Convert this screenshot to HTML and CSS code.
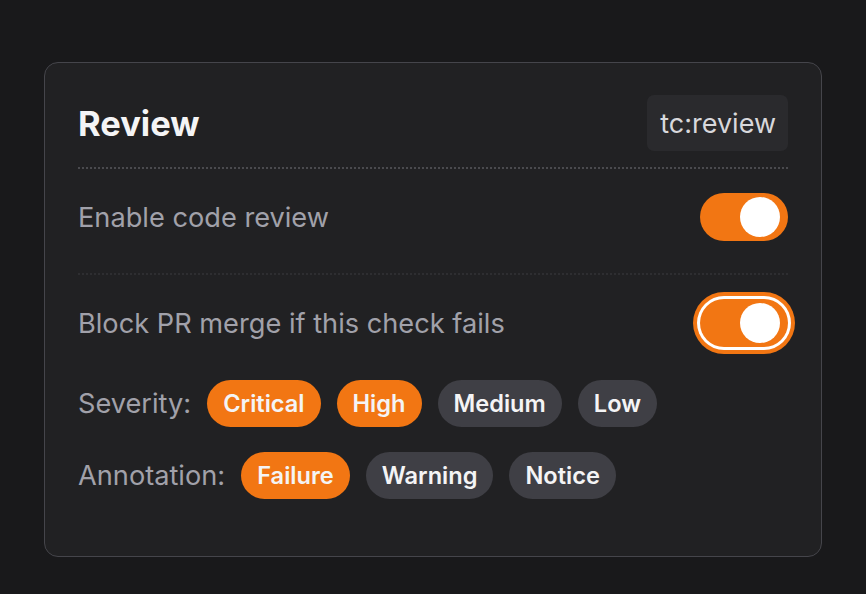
FILE: index.html
```html
<!DOCTYPE html>
<html>
<head>
<meta charset="utf-8">
<link rel="stylesheet" href="styles.css">
</head>
<body>
<div class="card">
  <div class="header">
    <h1 class="title">Review</h1>
    <span class="badge">tc:review</span>
  </div>
  <div class="row row-first">
    <span class="label">Enable code review</span>
    <span class="toggle"><span class="knob"></span></span>
  </div>
  <div class="row row-second">
    <span class="label">Block PR merge if this check fails</span>
    <span class="toggle focused"><span class="knob"></span></span>
  </div>
  <div class="chips chips-severity">
    <span class="label">Severity:</span>
    <span class="chip on">Critical</span>
    <span class="chip on">High</span>
    <span class="chip">Medium</span>
    <span class="chip">Low</span>
  </div>
  <div class="chips chips-annotation">
    <span class="label">Annotation:</span>
    <span class="chip on">Failure</span>
    <span class="chip">Warning</span>
    <span class="chip">Notice</span>
  </div>
</div>
</body>
</html>
```
FILE: styles.css
```css
html, body {
  margin: 0;
  padding: 0;
  background: #19191b;
}
body {
  font-family: Inter, "Noto Sans", sans-serif;
  padding: 62px 44px 38px 44px;
}
.card {
  width: 710px;
  height: 461px;
  border: 1.5px solid #45454b;
  border-radius: 14px;
  background: #212123;
  padding: 32px 33px 0 33px;
}
.header {
  display: flex;
  justify-content: space-between;
  align-items: center;
  height: 56px;
  padding-bottom: 16px;
  border-bottom: 2px dotted #4a4a4e;
}
.title {
  margin: 0;
  font-size: 34.5px;
  font-weight: 700;
  color: #f4f4f5;
}
.badge {
  background: #2a2a2d;
  border-radius: 7px;
  height: 56px;
  padding: 0 12px 0 13px;
  display: flex;
  align-items: center;
  font-size: 27px;
  color: #d8d8dc;
}
.row {
  display: flex;
  justify-content: space-between;
  align-items: center;
}
.row-first {
  padding: 24px 0 32px;
  border-bottom: 2px dotted #2e2e31;
}
.row-second {
  padding-top: 24px;
}
.label {
  font-size: 27.2px;
  color: #a1a1aa;
}
.toggle {
  width: 88px;
  height: 48px;
  border-radius: 24px;
  background: #f27613;
  display: flex;
  align-items: center;
  justify-content: flex-end;
  padding: 0 8px;
  box-sizing: border-box;
}
.toggle.focused {
  box-shadow: 0 0 0 3px #ffffff, 0 0 0 7px #f27613;
}
.knob {
  width: 40px;
  height: 40px;
  border-radius: 50%;
  background: #ffffff;
}
.chips {
  display: flex;
  align-items: center;
  gap: 16px;
}
.chips-severity {
  margin-top: 33px;
}
.chips-annotation {
  margin-top: 25px;
}
.chip {
  height: 47px;
  display: flex;
  align-items: center;
  padding: 0 16px;
  border-radius: 24px;
  background: #3f3f45;
  color: #f4f4f5;
  font-size: 23.6px;
  font-weight: 600;
}
.chip.on {
  background: #f27613;
}
```
